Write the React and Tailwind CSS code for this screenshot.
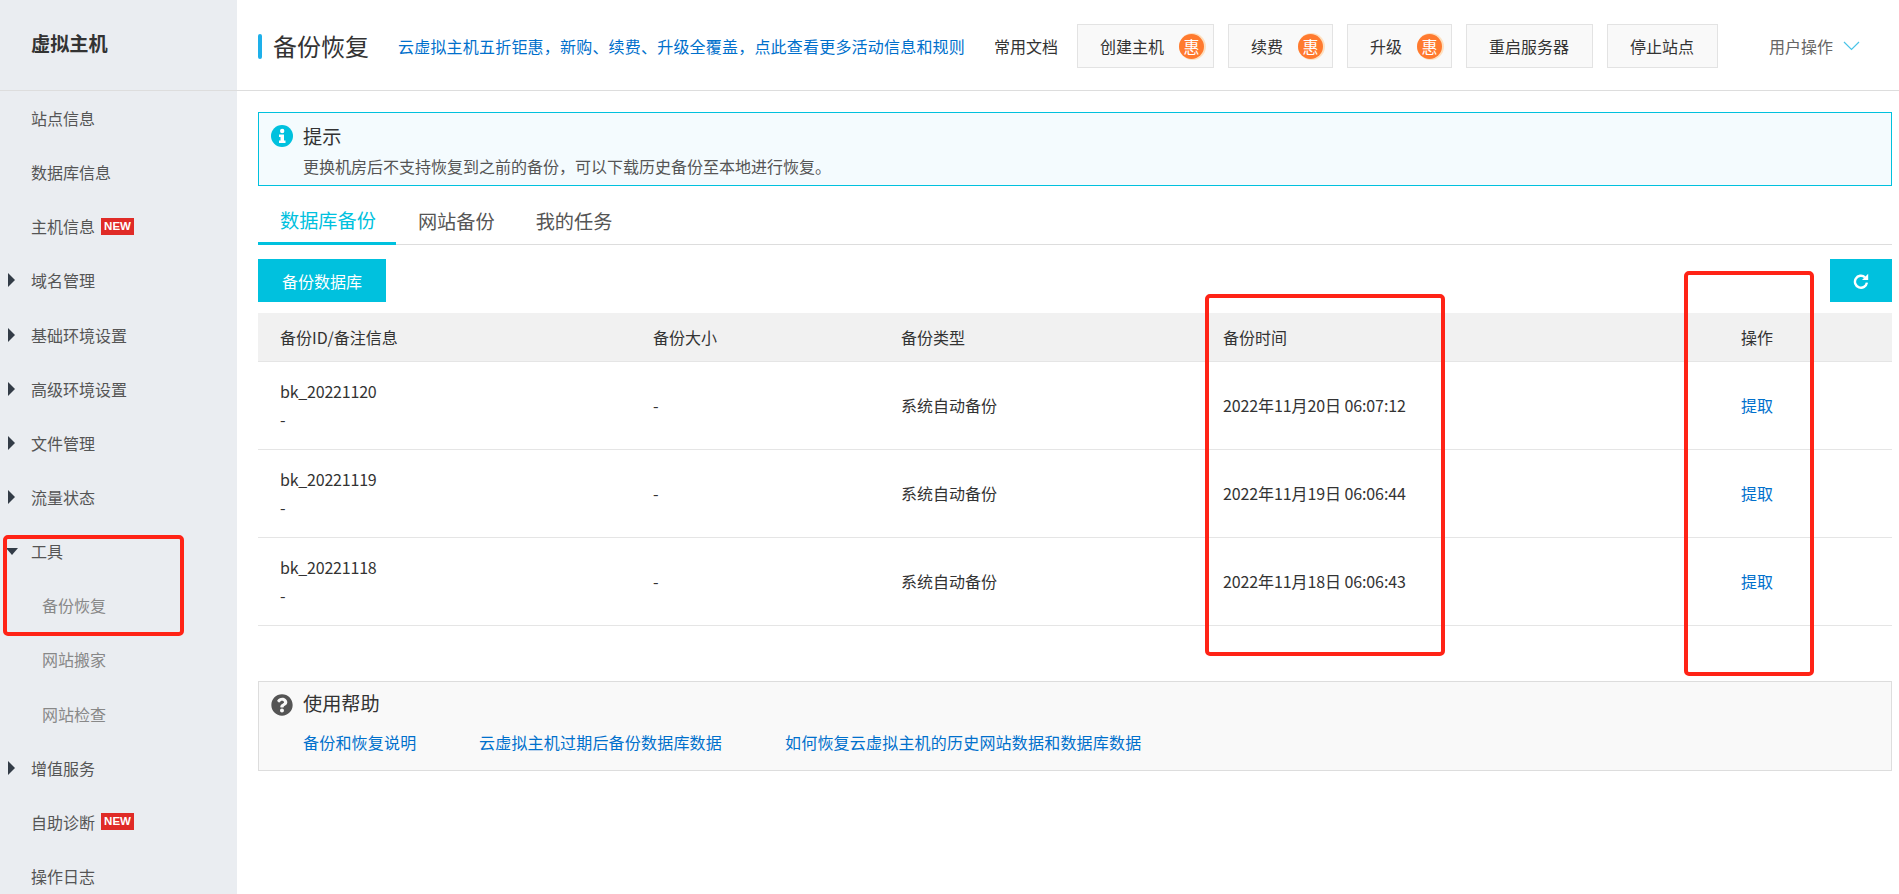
import React from 'react';
import { FaQuestionCircle } from 'react-icons/fa';

const sideItems = [
  { label: '站点信息' },
  { label: '数据库信息' },
  { label: '主机信息', isNew: true },
  { label: '域名管理', arrow: 'right' },
  { label: '基础环境设置', arrow: 'right' },
  { label: '高级环境设置', arrow: 'right' },
  { label: '文件管理', arrow: 'right' },
  { label: '流量状态', arrow: 'right' },
  { label: '工具', arrow: 'down' },
  { label: '备份恢复', sub: true },
  { label: '网站搬家', sub: true },
  { label: '网站检查', sub: true },
  { label: '增值服务', arrow: 'right' },
  { label: '自助诊断', isNew: true },
  { label: '操作日志' },
];

const backups = [
  { id: 'bk_20221120', time: '2022年11月20日 06:07:12' },
  { id: 'bk_20221119', time: '2022年11月19日 06:06:44' },
  { id: 'bk_20221118', time: '2022年11月18日 06:06:43' },
];

const promoText = '云虚拟主机五折钜惠\uFF0C新购、续费、升级全覆盖\uFF0C点此查看更多活动信息和规则';
const tipText = '更换机房后不支持恢复到之前的备份\uFF0C可以下载历史备份至本地进行恢复。';

const SideRow = ({ item }) => (
  <div className="relative flex h-[54.15px] shrink-0 items-center">
    {item.arrow === 'right' && (
      <span className="absolute left-[8px] top-[20px] h-0 w-0 border-y-[7px] border-l-[7px] border-y-transparent border-l-[#333c47]" />
    )}
    {item.arrow === 'down' && (
      <span className="absolute left-[6px] top-[24px] h-0 w-0 border-x-[6px] border-t-[7px] border-x-transparent border-t-[#333c47]" />
    )}
    <span className={item.sub ? 'ml-[42px] text-[#888]' : 'ml-[31px] text-[#555]'}>{item.label}</span>
    {item.isNew && (
      <span className="ml-[6px] flex h-[17px] w-[33px] items-center justify-center bg-[#e02b27] font-['Liberation_Sans',sans-serif] text-[11.5px] font-bold leading-none text-white">
        NEW
      </span>
    )}
  </div>
);

const TopButton = ({ label, badge }) => (
  <div className={`flex h-[44px] items-center border border-[#e3e3e3] bg-[#f9f9f9] pl-[22px] text-[#333] ${badge ? 'pr-[9px]' : 'pr-[23px]'}`}>
    <span>{label}</span>
    {badge && (
      <span className="ml-[15px] flex h-[25px] w-[25px] items-center justify-center rounded-full bg-[#ff7a2f] text-[16px] leading-none text-white shadow-[1px_0_0_1px_#fde0c0]">
        惠
      </span>
    )}
  </div>
);

const InfoIcon = () => (
  <svg width="22" height="22" viewBox="0 0 22 22" className="shrink-0">
    <circle cx="11" cy="11" r="11" fill="#00c1de" />
    <circle cx="11.2" cy="6" r="2.2" fill="#fff" />
    <path d="M8 9.5h5v6h1.5V18H8v-2.5h1.5V12H8z" fill="#fff" />
  </svg>
);

const RefreshIcon = () => (
  <svg width="16" height="16" viewBox="0 0 16 16">
    <path d="M12 4.3A6 6 0 1 0 13.9 9.6" fill="none" stroke="#fff" strokeWidth="2.4" />
    <path d="M9 7h6.2V.8z" fill="#fff" />
  </svg>
);

export default function App() {
  return (
    <div className="relative flex h-[894px] overflow-hidden bg-white font-['Noto_Sans_CJK_SC','Liberation_Sans',sans-serif] text-[16px] text-[#333]">
      {/* sidebar */}
      <aside className="flex w-[237px] shrink-0 flex-col bg-[#eaedf1]">
        <div className="flex h-[91px] shrink-0 items-center border-b border-[#ddd] pb-[4px] pl-[31px] text-[19.2px] font-bold text-[#333]">
          虚拟主机
        </div>
        {sideItems.map((item) => (
          <SideRow key={item.label} item={item} />
        ))}
      </aside>

      <main className="flex min-w-0 flex-1 flex-col">
        {/* header */}
        <header className="flex h-[91px] shrink-0 items-center border-b border-[#ddd] pl-[21px] pr-[39px] pt-[2px]">
          <span className="h-[25px] w-[4px] rounded-sm bg-[#1eb0ea]" />
          <h1 className="ml-[11px] text-[24px] font-normal text-[#333]">备份恢复</h1>
          <a className="ml-[29px] tracking-[0.2px] text-[#0070cc]">{promoText}</a>
          <div className="ml-auto flex items-center">
            <span className="mr-[19px] text-[#333]">常用文档</span>
            <div className="flex gap-[14px]">
              <TopButton label="创建主机" badge />
              <TopButton label="续费" badge />
              <TopButton label="升级" badge />
              <TopButton label="重启服务器" />
              <TopButton label="停止站点" />
            </div>
            <span className="ml-[51px] text-[#666]">用户操作</span>
            <svg className="ml-[10px]" width="17" height="10" viewBox="0 0 17 10" fill="none" stroke="#4ac4e8" strokeWidth="1.2">
              <path d="M1 1l7.5 7.5L16 1" />
            </svg>
          </div>
        </header>

        <div className="flex flex-col pl-[21px] pr-[7px]">
          {/* tip */}
          <div className="mt-[21px] flex h-[74px] border border-[#00c1de] bg-[#f4fbfe] pl-[12px] pt-[12px]">
            <InfoIcon />
            <div className="ml-[10px]">
              <div className="text-[19.2px] leading-[23px] text-[#333]">提示</div>
              <div className="mt-[7px] leading-[22px] text-[#555]">{tipText}</div>
            </div>
          </div>

          {/* tabs */}
          <div className="flex h-[59px] border-b border-[#ddd] text-[19.2px]">
            <div className="-mb-px flex items-center border-b-[3px] border-[#00c1de] pl-[22px] pr-[20px] pt-[13px] text-[#00c1de]">数据库备份</div>
            <div className="flex items-center pl-[22px] pr-[20px] pt-[13px] text-[#555]">网站备份</div>
            <div className="flex items-center pl-[21px] pt-[13px] text-[#555]">我的任务</div>
          </div>

          {/* toolbar */}
          <div className="mt-[14px] flex justify-between">
            <button className="flex h-[43px] w-[128px] items-center justify-center bg-[#00c1de] text-white">备份数据库</button>
            <button className="flex h-[43px] w-[62px] items-center justify-center bg-[#00c1de] text-white">
              <RefreshIcon />
            </button>
          </div>

          {/* table */}
          <table className="mt-[11px] w-full table-fixed border-collapse text-left">
            <thead>
              <tr className="h-[48px] border-b border-[#e5e5e5] bg-[#f1f1f1]">
                <th className="w-[373px] pl-[22px] font-normal">备份ID/备注信息</th>
                <th className="w-[248px] pl-[22px] font-normal">备份大小</th>
                <th className="w-[322px] pl-[22px] font-normal">备份类型</th>
                <th className="pl-[22px] font-normal">备份时间</th>
                <th className="w-[270px] text-center font-normal">操作</th>
              </tr>
            </thead>
            <tbody>
              {backups.map((b) => (
                <tr key={b.id} className="h-[88px] border-b border-[#e5e5e5]">
                  <td className="pl-[22px] leading-[28px]">
                    <div className="tracking-[-0.2px]">{b.id}</div>
                    <div>-</div>
                  </td>
                  <td className="pl-[22px]">-</td>
                  <td className="pl-[22px]">系统自动备份</td>
                  <td className="pl-[22px] tracking-[-0.1px]">{b.time}</td>
                  <td className="text-center text-[#0070cc]">提取</td>
                </tr>
              ))}
            </tbody>
          </table>

          {/* help */}
          <div className="mt-[55px] flex h-[90px] border border-[#ddd] bg-[#f9f9f9] pl-[12px] pt-[12px]">
            <FaQuestionCircle className="text-[22px] text-[#555]" />
            <div className="ml-[10px] -mt-[2px]">
              <div className="text-[19.2px] leading-[23px] text-[#333]">使用帮助</div>
              <div className="mt-[16px] flex leading-[22px] tracking-[0.2px] text-[#0070cc]">
                <a className="w-[176px]">备份和恢复说明</a>
                <a className="w-[306px]">云虚拟主机过期后备份数据库数据</a>
                <a>如何恢复云虚拟主机的历史网站数据和数据库数据</a>
              </div>
            </div>
          </div>
        </div>
      </main>

      {/* red annotation boxes over the screenshot */}
      <div className="absolute left-[3px] top-[535px] h-[101px] w-[181px] rounded-[5px] border-4 border-[#ff2316]" />
      <div className="absolute left-[1205px] top-[294px] h-[362px] w-[240px] rounded-[5px] border-4 border-[#ff2316]" />
      <div className="absolute left-[1684px] top-[271px] h-[405px] w-[130px] rounded-[5px] border-4 border-[#ff2316]" />
    </div>
  );
}
